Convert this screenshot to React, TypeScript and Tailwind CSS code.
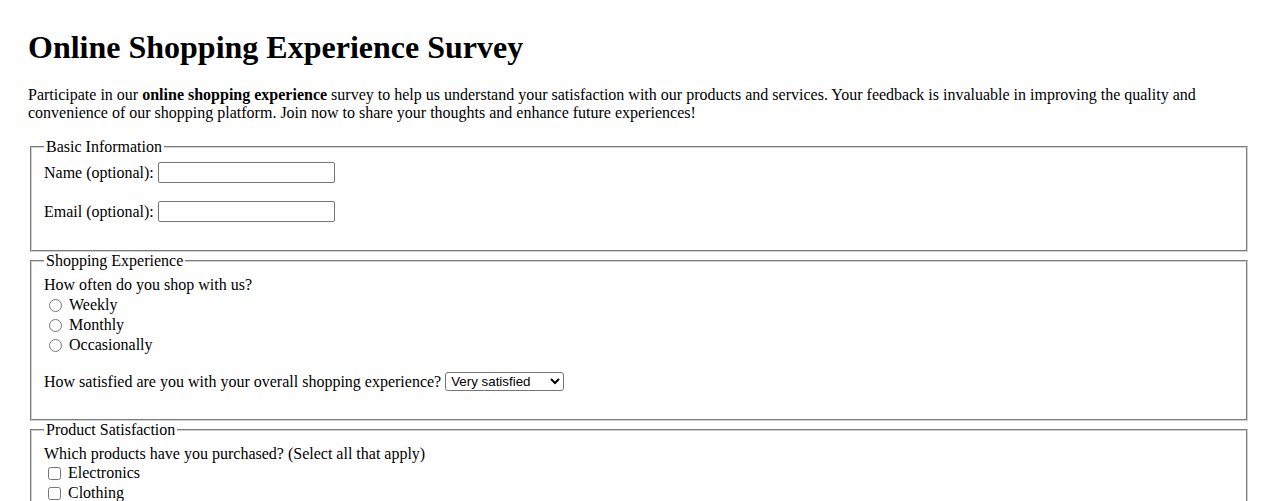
import React from 'react';

const serif = "font-['Liberation_Serif','Times_New_Roman',serif]";
const ctl = "font-['Liberation_Sans',Arial,sans-serif] text-[13.333px]";

const Field = ({ label, id }: { label: string; id: string }) => (
  <div className="flex h-[21px] items-center gap-[4px]">
    <label htmlFor={id}>{label}</label>
    <input
      id={id}
      type="text"
      className={`${ctl} h-[21px] w-[177px] rounded-[2px] border border-[#767676] bg-white px-[2px]`}
    />
  </div>
);

const Radio = ({ label }: { label: string }) => (
  <label className="flex h-[20px] items-center">
    <input type="radio" name="freq" className="ml-[5px] mr-[7px] h-[13px] w-[13px]" />
    {label}
  </label>
);

const Check = ({ label }: { label: string }) => (
  <label className="flex h-[20px] items-center">
    <input type="checkbox" className="ml-[4px] mr-[7px] h-[13px] w-[13px]" />
    {label}
  </label>
);

const Box = ({ title, children }: { title: string; children: React.ReactNode }) => (
  <fieldset className="mx-[2px] border-2 border-[#d0d0d0] px-[12px] pb-[10px] [border-style:groove]">
    <legend className="px-[2px] leading-[18px]">{title}</legend>
    {children}
  </fieldset>
);

export default function App() {
  return (
    <div className={`${serif} h-[501px] overflow-hidden bg-white px-[28px] pt-[29px] text-[16px] text-black`}>
      <h1 className="mb-[20px] text-[32px] font-bold leading-[37px]">Online Shopping Experience Survey</h1>
      <p className="mb-[16px] leading-[18px]">
        Participate in our <b>online shopping experience</b> survey to help us understand your satisfaction with our
        products and services. Your feedback is invaluable in improving the quality and convenience of our shopping
        platform. Join now to share your thoughts and enhance future experiences!
      </p>

      <Box title="Basic Information">
        <div className="pt-[6px] pb-[18px]">
          <Field label="Name (optional):" id="name" />
          <div className="mt-[18px]">
            <Field label="Email (optional):" id="email" />
          </div>
        </div>
      </Box>

      <Box title="Shopping Experience">
        <div className="pt-[6px] pb-[17px] leading-[18px]">
          <div className="h-[19px]">How often do you shop with us?</div>
          <Radio label="Weekly" />
          <Radio label="Monthly" />
          <Radio label="Occasionally" />
          <div className="mt-[17px] flex h-[20px] items-start gap-[4px]">
            <label htmlFor="sat" className="leading-[19px]">How satisfied are you with your overall shopping experience?</label>
            <select
              id="sat"
              className={`${ctl} h-[19px] w-[119px] rounded-[3px] border border-[#767676] bg-white pl-[1px] text-black`}
            >
              <option>Very satisfied</option>
              <option>Satisfied</option>
              <option>Neutral</option>
              <option>Dissatisfied</option>
              <option>Very dissatisfied</option>
            </select>
          </div>
        </div>
      </Box>

      <Box title="Product Satisfaction">
        <div className="pt-[6px] leading-[18px]">
          <div className="h-[18px]">Which products have you purchased? (Select all that apply)</div>
          <Check label="Electronics" />
          <Check label="Clothing" />
          <Check label="Home &amp; Kitchen" />
          <Check label="Books" />
        </div>
      </Box>
    </div>
  );
}
